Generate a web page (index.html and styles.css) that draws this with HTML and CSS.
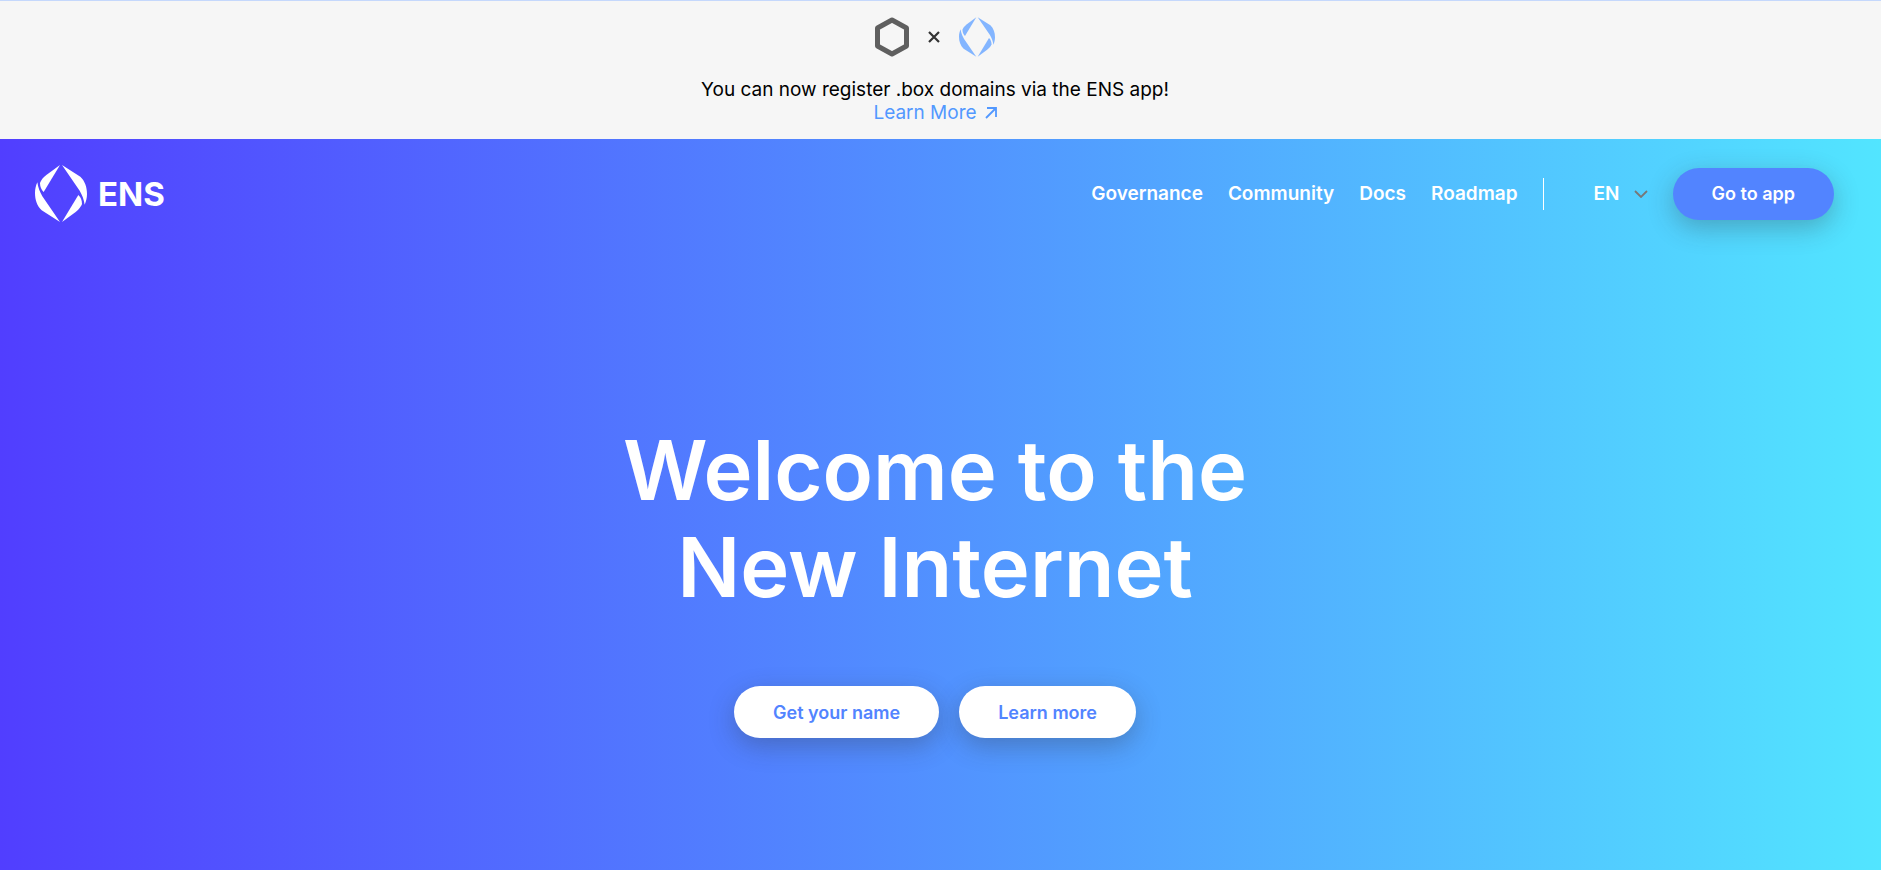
FILE: index.html
```html
<!DOCTYPE html>
<html lang="en">
<head>
    <meta charset="UTF-8">
    <meta name="viewport" content="width=device-width, initial-scale=1.0">
    <title>Ethereum Name Service</title>
    <link rel="stylesheet" href="styles.css">
</head>
<body>
    <svg class="sprite" aria-hidden="true">
        <symbol id="ens-mark" viewBox="0 0 156 171">
            <path d="M75 0 L26 81 C19 75 15 65 15 54 C17 47 24 38 34 30 Z"/>
            <path d="M7 52 C9 68 15 82 22 94 L75 171 L20 136 C6 123 0 104 0 84 C0 72 3 61 7 52 Z"/>
            <path d="M81 171 L130 90 C137 96 141 106 141 117 C139 124 132 133 122 141 Z"/>
            <path d="M149 119 C147 103 141 89 134 77 L81 0 L136 35 C150 48 156 67 156 87 C156 99 153 110 149 119 Z"/>
        </symbol>
    </svg>

    <div class="banner">
        <div class="banner-icons">
            <svg class="icon-box" viewBox="0 0 34 40"><path d="M17 3 L31.5 11 V29 L17 37 L2.5 29 V11 Z"/></svg>
            <svg class="icon-times" viewBox="0 0 12 12"><path d="M1 1 L11 11 M11 1 L1 11"/></svg>
            <svg class="icon-ens"><use href="#ens-mark"/></svg>
        </div>
        <p>You can now register .box domains via the ENS app!</p>
        <a href="#" class="banner-link">Learn More
            <svg class="icon-arrow" viewBox="0 0 12 12"><path d="M1 11 L11 1 M2 1 H11 V10"/></svg>
        </a>
    </div>

    <div class="hero">
        <header class="navbar">
            <a href="#" class="logo">
                <svg class="logo-mark"><use href="#ens-mark"/></svg>
                <span>ENS</span>
            </a>
            <nav class="nav-links">
                <a href="#">Governance</a>
                <a href="#">Community</a>
                <a href="#">Docs</a>
                <a href="#">Roadmap</a>
            </nav>
            <div class="language">
                <select id="language" aria-label="Language">
                    <option>EN</option>
                </select>
                <svg class="icon-chevron" viewBox="0 0 14 8"><path d="M1 1 L7 7 L13 1"/></svg>
            </div>
            <button type="button" class="btn btn-primary">Go to app</button>
        </header>

        <main class="welcome">
            <h1>Welcome to the<br>New Internet</h1>
            <div class="actions">
                <button type="button" class="btn">Get your name</button>
                <button type="button" class="btn">Learn more</button>
            </div>
        </main>
    </div>
</body>
</html>
```

FILE: styles.css
```css
:root {
    --blue: #5284ff;
    --gutter: 11px;
}

* {
    box-sizing: border-box;
}

body {
    margin: 0;
    min-height: 100vh;
    display: flex;
    flex-direction: column;
    font-family: Inter, "Liberation Sans", sans-serif;
    font-size: 19px;
}

a {
    text-decoration: none;
}

.sprite {
    position: absolute;
    width: 0;
    height: 0;
}

.banner {
    border-top: 1px solid #c5d8fc;
    background-color: #f6f6f6;
    padding: 16px var(--gutter) 15px 0;
    text-align: center;
    line-height: 23px;
    color: #000;
}

.banner-icons {
    display: flex;
    justify-content: center;
    align-items: center;
    gap: 19px;
    height: 40px;
    margin-bottom: 21px;
}

.icon-box {
    width: 34px;
    height: 40px;
    fill: none;
    stroke: #5f5f5f;
    stroke-width: 5;
    stroke-linejoin: round;
}

.icon-times {
    width: 12px;
    height: 12px;
    stroke: #333;
    stroke-width: 2.2;
}

.icon-ens {
    width: 36px;
    height: 40px;
    fill: #83b5ff;
}

.banner p {
    margin: 0;
}

.banner-link {
    display: flex;
    justify-content: center;
    align-items: center;
    gap: 8px;
    color: #5298ff;
}

.icon-arrow {
    width: 12px;
    height: 12px;
    fill: none;
    stroke: currentColor;
    stroke-width: 1.8;
}

.hero {
    flex: 1;
    padding-right: var(--gutter);
    background: linear-gradient(90deg, #513eff 0%, #52e5ff 100%);
    color: #fff;
}

.navbar {
    display: flex;
    align-items: center;
    padding: 26px 36px 24px 35px;
}

.logo {
    display: flex;
    align-items: center;
    gap: 11px;
    margin-right: auto;
    color: #fff;
    font-size: 33px;
    font-weight: 700;
    line-height: 36px;
}

.logo-mark {
    width: 52px;
    height: 57px;
    fill: #fff;
}

.nav-links {
    display: flex;
    align-items: center;
    gap: 25px;
    height: 32px;
    padding-right: 25px;
    border-right: 1px solid #fff;
}

.nav-links a {
    color: #fff;
    font-weight: 600;
}

.language {
    position: relative;
    margin: 0 25px 0 50px;
}

.language select {
    appearance: none;
    width: 54px;
    padding: 0;
    border: none;
    background: none;
    color: #fff;
    font: inherit;
    font-weight: 600;
}

.icon-chevron {
    position: absolute;
    right: 0;
    top: 8px;
    width: 14px;
    height: 8px;
    fill: none;
    stroke: #777;
    stroke-width: 1.8;
    pointer-events: none;
}

.btn {
    height: 52px;
    padding: 0 39px;
    border: none;
    border-radius: 26px;
    background-color: #fff;
    box-shadow: 0 8px 26px rgba(51, 51, 51, 0.3);
    color: var(--blue);
    font-family: inherit;
    font-size: 18px;
    font-weight: 600;
    cursor: pointer;
}

.btn-primary {
    background-color: var(--blue);
    color: #fff;
}

.welcome {
    display: flex;
    flex-direction: column;
    align-items: center;
    padding-top: 176px;
}

.welcome h1 {
    margin: 0 0 70px;
    font-size: 83px;
    font-weight: 600;
    line-height: 97px;
    text-align: center;
}

.actions {
    display: flex;
    gap: 20px;
}
```
